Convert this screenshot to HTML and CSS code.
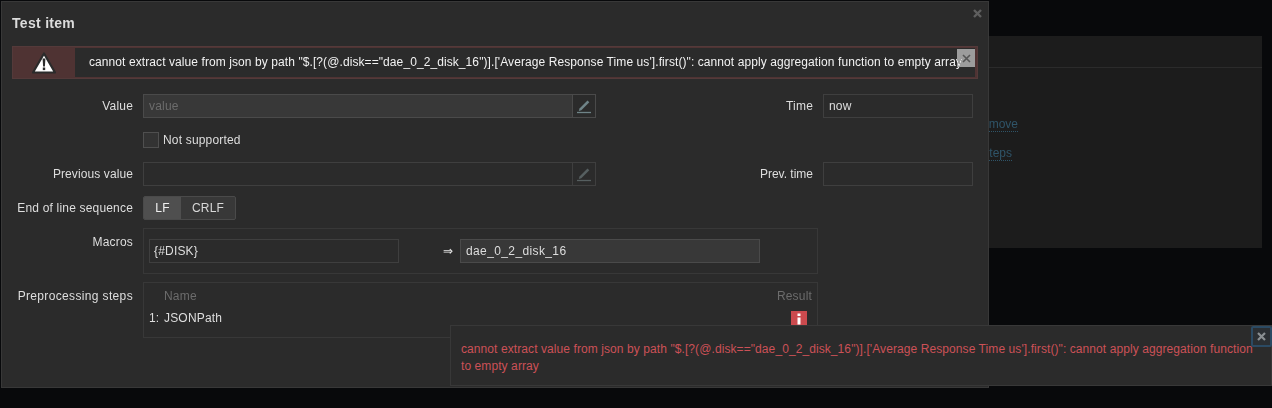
FILE: index.html
```html
<!DOCTYPE html>
<html lang="en">
<head>
<meta charset="utf-8">
<title>Test item</title>
<link rel="stylesheet" href="styles.css">
</head>
<body>
<div class="bg-panel">
  <div class="bg-head"></div>
  <div class="bg-links">
    <a class="bg-link">Remove</a>
    <a class="bg-link">Test all steps</a>
  </div>
</div>

<section class="modal">
  <h4 class="modal-title">Test item</h4>
  <button class="modal-close" type="button" aria-label="Close">
    <svg width="9" height="9" viewBox="0 0 9 9"><path d="M1 1l7 7M8 1L1 8" stroke="#5f5f5f" stroke-width="2.4"/></svg>
  </button>

  <div class="msg-bad">
    <div class="msg-icon">
      <svg width="24" height="24" viewBox="0 0 24 24"><path d="M12 2.500L23 21.500H1z" fill="#fff" stroke="#2b2b2b" stroke-width="2.200" stroke-linejoin="round"/><path d="M10.600 7.500h2.800l-.5 8h-1.800z" fill="#2b2b2b"/><rect x="10.800" y="16.500" width="2.400" height="2.600" fill="#2b2b2b"/></svg>
    </div>
    <div class="msg-text">cannot extract value from json by path "$.[?(@.disk=="dae_0_2_disk_16")].['Average Response Time us'].first()": cannot apply aggregation function to empty array</div>
    <button class="msg-close" type="button" aria-label="Close">
      <svg width="9" height="9" viewBox="0 0 9 9"><path d="M1 1l7 7M8 1L1 8" stroke="#555" stroke-width="1.600"/></svg>
    </button>
  </div>

  <form class="form">
    <div class="row row-value">
      <label class="lbl">Value</label>
      <div class="field-wrap">
        <span class="input input-filled input-main placeholder">value</span>
        <span class="pen-btn">
          <svg width="16" height="16" viewBox="0 0 16 16"><path d="M3.500 10.500L11.500 2.500l1.800 1.800-8 8-2.500.7z" fill="#6f8488"/><path d="M1 14.500h14" stroke="#6f8488" stroke-width="1.300"/></svg>
        </span>
      </div>
      <label class="lbl lbl-time">Time</label>
      <span class="input input-time">now</span>
    </div>

    <div class="row row-check">
      <span class="check"></span>
      <span class="check-label">Not supported</span>
    </div>

    <div class="row row-value">
      <label class="lbl lbl-prev">Previous value</label>
      <div class="field-wrap">
        <span class="input input-main"></span>
        <span class="pen-btn pen-dim">
          <svg width="16" height="16" viewBox="0 0 16 16"><path d="M3.500 10.500L11.500 2.500l1.800 1.800-8 8-2.500.7z" fill="#565f60"/><path d="M1 14.500h14" stroke="#565f60" stroke-width="1.300"/></svg>
        </span>
      </div>
      <label class="lbl lbl-time lbl-prevtime">Prev. time</label>
      <span class="input input-time"></span>
    </div>

    <div class="row row-eol">
      <label class="lbl">End of line sequence</label>
      <div class="radio">
        <span class="radio-item radio-on">LF</span>
        <span class="radio-item radio-off">CRLF</span>
      </div>
    </div>

    <div class="row row-macros">
      <label class="lbl lbl-top">Macros</label>
      <div class="box macro-box">
        <span class="input input-macro">{#DISK}</span>
        <span class="arrow">⇒</span>
        <span class="input input-filled input-macro-val">dae_0_2_disk_16</span>
      </div>
    </div>

    <div class="row row-steps">
      <label class="lbl lbl-top lbl-steps">Preprocessing steps</label>
      <div class="box steps-box">
        <div class="steps-head"><span class="step-name-h">Name</span><span>Result</span></div>
        <div class="steps-row">
          <span class="step-label"><span class="step-num">1:</span>JSONPath</span>
          <span class="info-btn">
            <svg width="6" height="12" viewBox="0 0 6 12"><rect x="1.500" y="0.500" width="3" height="2.500" fill="#fff"/><rect x="1.500" y="4.500" width="3" height="7" fill="#fff"/></svg>
          </span>
        </div>
      </div>
    </div>
  </form>
</section>

<aside class="hint">
  <button class="hint-close" type="button" aria-label="Close">
    <svg width="9" height="9" viewBox="0 0 9 9"><path d="M1 1l7 7M8 1L1 8" stroke="#8a8f92" stroke-width="2.200"/></svg>
  </button>
  <p class="hint-text">cannot extract value from json by path "$.[?(@.disk=="dae_0_2_disk_16")].['Average Response Time us'].first()": cannot apply aggregation function to empty array</p>
</aside>
</body>
</html>
```

FILE: styles.css
```css
* { box-sizing: border-box; }
html, body { margin: 0; height: 100%; overflow: hidden; }
body {
  background: #08090b;
  font-family: "Liberation Sans", Arial, sans-serif;
  font-size: 12px;
  color: #e6e6e6;
  position: relative;
}
button { padding: 0; border: 0; background: none; font: inherit; }

.bg-panel {
  position: absolute;
  left: 860px;
  top: 36px;
  width: 402px;
  height: 212px;
  background: #1c1c1c;
}
.bg-head { height: 32px; border-bottom: 1px solid #2b2b2b; }
.bg-links { display: flex; flex-direction: column; align-items: flex-end; }
.bg-link {
  position: absolute;
  color: #2f5468;
  border-bottom: 1px dotted #2f5468;
  line-height: 14px;
}
.bg-link:nth-child(1) { right: 244px; top: 81px; }
.bg-link:nth-child(2) { right: 250px; top: 110px; }

.modal {
  position: absolute;
  left: 1px;
  top: 1px;
  width: 988px;
  height: 387px;
  background: #2b2b2b;
  border: 1px solid #383838;
  padding: 0 15px 0 10px;
}
.modal-title {
  margin: 13px 0 0;
  font-size: 14px;
  line-height: 17px;
  font-weight: bold;
  color: #dcdcdc;
  letter-spacing: .3px;
}
.modal-close {
  position: absolute;
  left: 970px;
  top: 6px;
  width: 11px;
  height: 11px;
  display: flex;
  align-items: center;
  justify-content: center;
}

.msg-bad {
  position: relative;
  display: flex;
  height: 33px;
  width: 966px;
  margin: 14px 0 0;
  background: #4f3333;
  border: 1px solid #543a3a;
}
.msg-icon {
  width: 62px;
  flex: none;
  display: flex;
  align-items: center;
  justify-content: center;
}
.msg-text {
  flex: 1;
  margin: 1px 2px 1px 0;
  background: #2b2b2b;
  padding: 7px 0 0 14px;
  white-space: nowrap;
  line-height: 14px;
  color: #f2f2f2;
  overflow: visible;
  letter-spacing: .085px;
}
.msg-close {
  position: absolute;
  left: 944px;
  top: 2px;
  width: 18px;
  height: 18px;
  background: #9c9c9c;
  display: flex;
  align-items: center;
  justify-content: center;
  mix-blend-mode: lighten;
}

.form { display: flex; flex-direction: column; margin-top: 15px; }
.row { display: flex; align-items: center; }
.lbl {
  width: 121px;
  margin-right: 10px;
  flex: none;
  text-align: right;
  white-space: nowrap;
  color: #dedede;
  letter-spacing: .18px;
}
.lbl-top { align-self: flex-start; }
.lbl-steps { letter-spacing: .35px; }
.lbl-prev { letter-spacing: .1px; }
.row-value { height: 24px; }
.row-check { height: 18px; margin: 13px 0 13px; padding-left: 131px; }
.row-eol { height: 24px; margin-top: 10px; }
.row-macros { height: 46px; margin-top: 8px; }
.row-macros .lbl-top { margin-top: 7px; }
.row-steps { height: 56px; margin-top: 8px; }
.row-steps .lbl-top { margin-top: 7px; }

.field-wrap { display: flex; width: 453px; flex: none; }
.input {
  display: block;
  height: 24px;
  line-height: 22px;
  padding: 0 5px;
  border: 1px solid #3f3f3f;
  background: #2b2b2b;
  color: #dedede;
  letter-spacing: .18px;
  white-space: nowrap;
}
.input-filled { background: #383838; border-color: #4a4a4a; }
.input-main { flex: 1; border-right: 0; }
.placeholder { color: #6c6c6c; }
.pen-btn {
  width: 24px;
  height: 24px;
  flex: none;
  display: flex;
  align-items: center;
  justify-content: center;
  border: 1px solid #4a4a4a;
}
.pen-dim { border-color: #3f3f3f; }
.lbl-time { width: 217px; margin-right: 10px; }
.lbl-prevtime { letter-spacing: 0; }
.input-time { width: 150px; flex: none; }

.check {
  width: 16px;
  height: 16px;
  border: 1px solid #4f4f4f;
  background: #333;
  margin-right: 4px;
}
.check-label { color: #dedede; letter-spacing: .18px; }

.radio {
  display: flex;
  height: 24px;
  border: 1px solid #4a4a4a;
  border-radius: 2px;
  overflow: hidden;
  background: #383838;
}
.radio-item {
  line-height: 22px;
  text-align: center;
  color: #d8d8d8;
  letter-spacing: .18px;
}
.radio-on { width: 37px; background: #4f4f4f; color: #f0f0f0; }
.radio-off { width: 54px; }

.box { width: 675px; flex: none; border: 1px solid #383838; }
.macro-box {
  height: 46px;
  display: flex;
  align-items: center;
  padding-left: 5px;
}
.input-macro { width: 250px; padding-left: 4px; }
.arrow { width: 61px; padding-left: 44px; white-space: nowrap; }
.input-macro-val { width: 300px; letter-spacing: .38px; }

.steps-box { height: 56px; padding: 6px 5px 0; }
.steps-head {
  display: flex;
  justify-content: space-between;
  line-height: 14px;
  color: #6c6c6c;
  letter-spacing: .18px;
}
.step-name-h { margin-left: 15px; }
.steps-row {
  display: flex;
  justify-content: space-between;
  align-items: flex-start;
  margin-top: 8px;
  line-height: 14px;
  color: #dedede;
  letter-spacing: .18px;
}
.step-num { display: inline-block; width: 15px; }
.info-btn {
  width: 16px;
  height: 16px;
  margin-right: 5px;
  background: #cb4a4e;
  display: flex;
  align-items: center;
  justify-content: center;
}

.hint {
  position: absolute;
  left: 450px;
  top: 325px;
  width: 822px;
  height: 61px;
  background: #2b2b2b;
  border: 1px solid #383838;
  padding: 15px 10px 0;
}
.hint-text {
  margin: 0;
  color: #cc5157;
  line-height: 17px;
  letter-spacing: .085px;
}
.hint-close {
  position: absolute;
  right: -1px;
  top: 0;
  width: 21px;
  height: 21px;
  border: 2px solid #2b4a63;
  border-radius: 2px;
  background: #2b2f33;
  display: flex;
  align-items: center;
  justify-content: center;
}
```
